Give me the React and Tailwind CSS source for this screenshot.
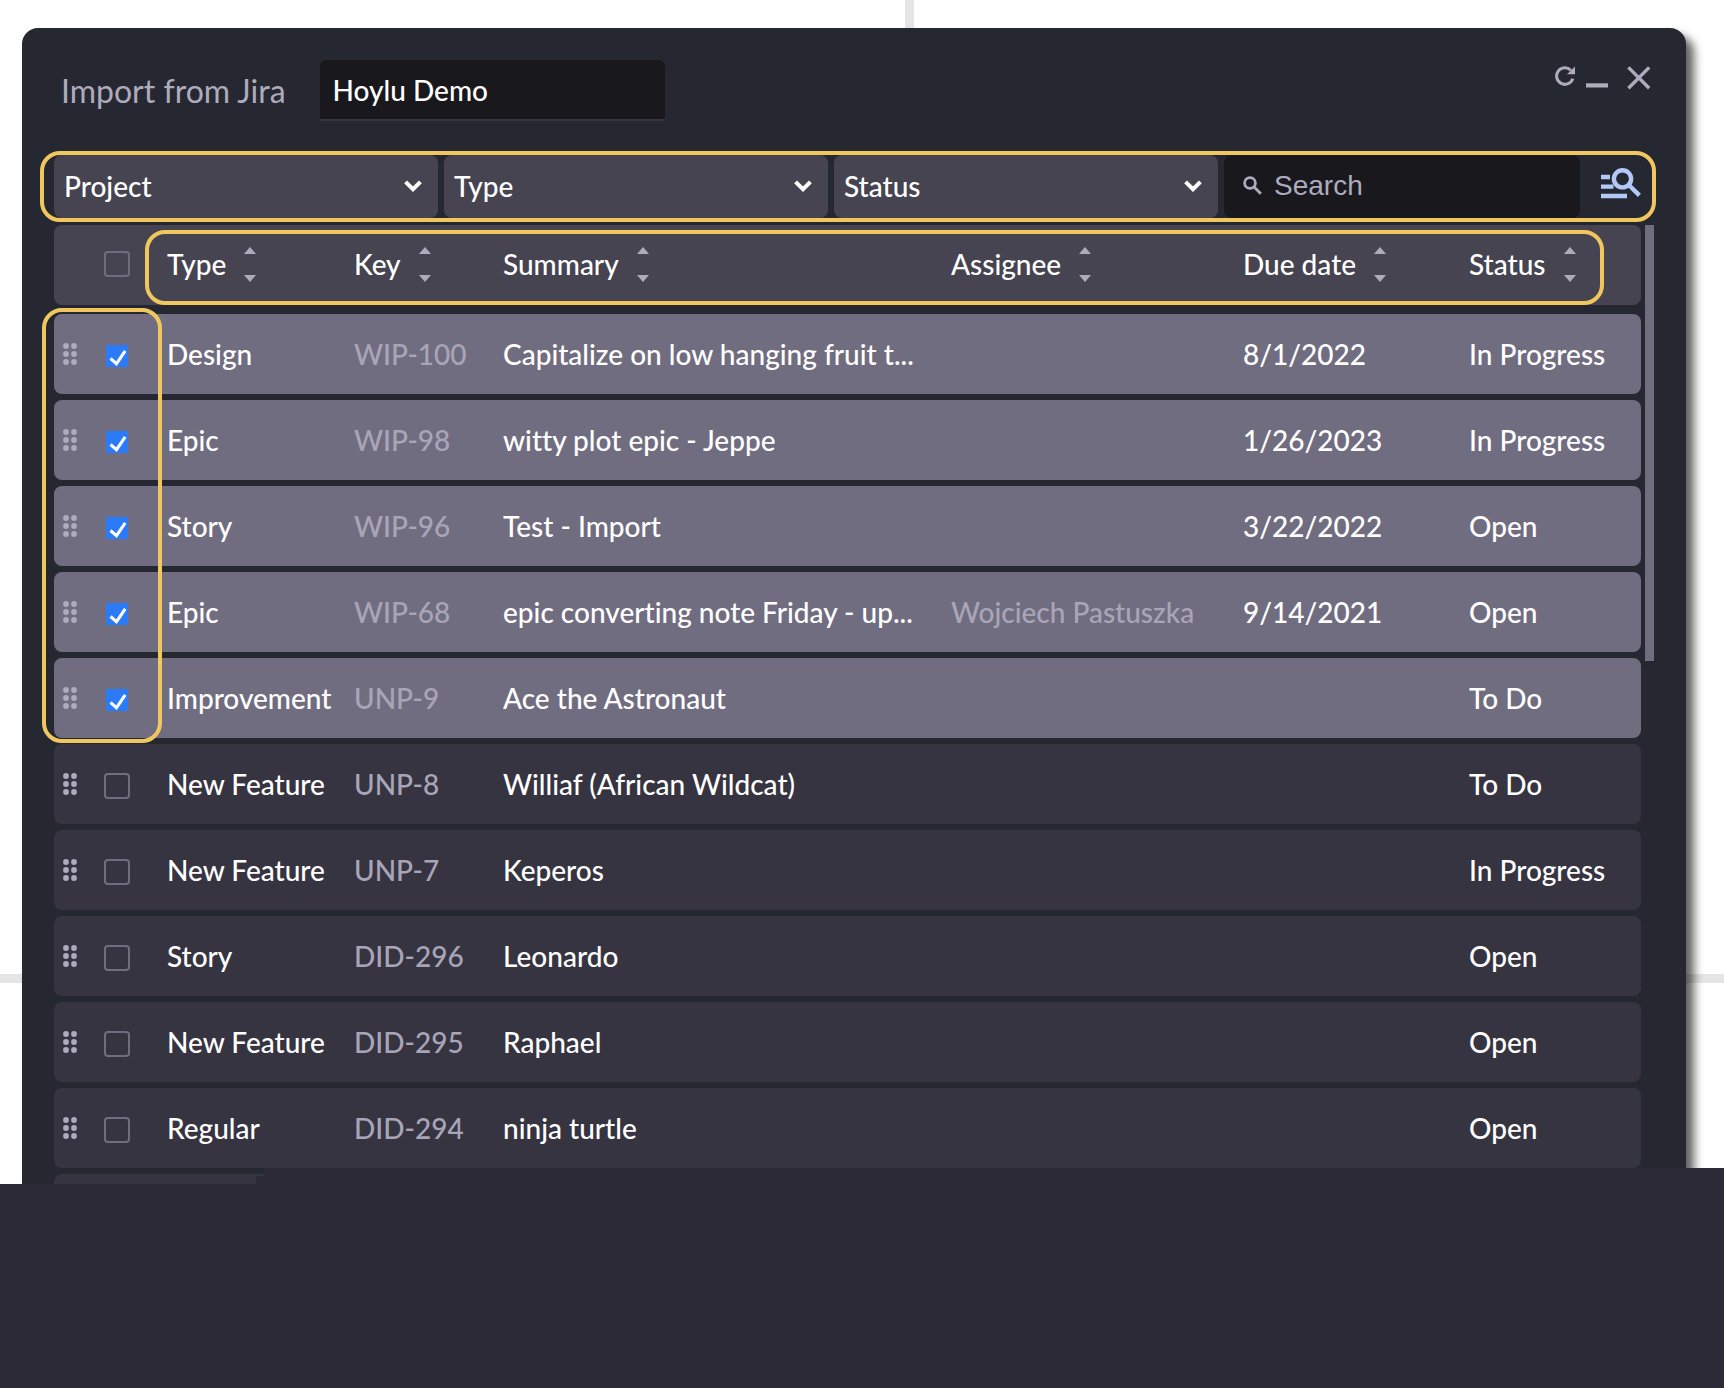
const ISSUES = [
  { type: "Design", key: "WIP-100", summary: "Capitalize on low hanging fruit t...", assignee: "", due: "8/1/2022", status: "In Progress", checked: true },
  { type: "Epic", key: "WIP-98", summary: "witty plot epic - Jeppe", assignee: "", due: "1/26/2023", status: "In Progress", checked: true },
  { type: "Story", key: "WIP-96", summary: "Test - Import", assignee: "", due: "3/22/2022", status: "Open", checked: true },
  { type: "Epic", key: "WIP-68", summary: "epic converting note Friday - up...", assignee: "Wojciech Pastuszka", due: "9/14/2021", status: "Open", checked: true },
  { type: "Improvement", key: "UNP-9", summary: "Ace the Astronaut", assignee: "", due: "", status: "To Do", checked: true },
  { type: "New Feature", key: "UNP-8", summary: "Williaf (African Wildcat)", assignee: "", due: "", status: "To Do", checked: false },
  { type: "New Feature", key: "UNP-7", summary: "Keperos", assignee: "", due: "", status: "In Progress", checked: false },
  { type: "Story", key: "DID-296", summary: "Leonardo", assignee: "", due: "", status: "Open", checked: false },
  { type: "New Feature", key: "DID-295", summary: "Raphael", assignee: "", due: "", status: "Open", checked: false },
  { type: "Regular", key: "DID-294", summary: "ninja turtle", assignee: "", due: "", status: "Open", checked: false },
];

const COLUMNS = ["Type", "Key", "Summary", "Assignee", "Due date", "Status"];

const ROW_GRID =
  "grid h-20 grid-cols-[50px_63px_187px_149px_minmax(0,1fr)_292px_226px_172px] items-center rounded-lg";

function Highlight({ className }) {
  return <div aria-hidden="true" className={`pointer-events-none absolute z-10 rounded-[20px] border-4 border-[#f0c75e] ${className}`} />;
}

function FilterSelect({ label }) {
  return (
    <div className="relative min-w-0 flex-1">
      <select
        aria-label={label}
        className="h-[63px] w-full appearance-none rounded-lg bg-[#464450] pb-[2px] pl-[10px] pr-12 text-[28px] text-white outline-none"
      >
        <option>{label}</option>
      </select>
      <svg viewBox="0 0 18 12" className="pointer-events-none absolute right-4 top-[25px] h-3 w-[18px]" fill="none" stroke="#fff" strokeWidth="4">
        <path d="M1.6 1.8 9 9.2l7.4-7.4" />
      </svg>
    </div>
  );
}

function SortIcon() {
  return (
    <svg viewBox="0 0 12 36" className="mt-[2px] h-9 w-3" fill="#aeabbd">
      <path d="M6 0l6 7H0z" />
      <path d="M0 28h12l-6 7z" />
    </svg>
  );
}

function DragHandle() {
  return (
    <svg viewBox="0 0 14 22" className="ml-[9px] h-[22px] w-[14px]" fill="#aeabbd">
      {[3, 11, 19].map((y) => (
        <g key={y}>
          <circle cx="3" cy={y} r="2.9" />
          <circle cx="11" cy={y} r="2.9" />
        </g>
      ))}
    </svg>
  );
}

function Checkbox({ label, checked = false }) {
  return (
    <span className="relative flex h-[26px] w-[26px] items-center justify-center">
      <input
        type="checkbox"
        aria-label={label}
        defaultChecked={checked}
        className="peer h-[26px] w-[26px] appearance-none rounded border-2 border-[#716d80] checked:h-[22px] checked:w-[22px] checked:rounded-[1px] checked:border-0 checked:bg-[#2b7bf8]"
      />
      <svg
        viewBox="0 0 22 22"
        className="pointer-events-none absolute left-[2px] top-[2px] hidden h-[22px] w-[22px] peer-checked:block"
        fill="none"
        stroke="#fff"
        strokeWidth="3"
      >
        <path d="M4.5 13.5l6 5.2L19.2 5.8" />
      </svg>
    </span>
  );
}

function WindowControls() {
  return (
    <div className="flex pt-[6px] text-[#aeabbd]">
      <button type="button" aria-label="Refresh" className="h-6 w-[20px]">
        <svg viewBox="0 0 20 24" className="h-6 w-5" fill="none" stroke="currentColor" strokeWidth="3">
          <path d="M17.8 12.6A8.3 8.3 0 1 1 15.8 4.2" />
          <path d="M20 .6v7.6h-8z" fill="currentColor" stroke="none" />
        </svg>
      </button>
      <button type="button" aria-label="Minimize" className="ml-[11px] h-6 w-[22px]">
        <svg viewBox="0 0 22 24" className="h-6 w-[22px]" fill="currentColor">
          <path d="M0 17.3h22v4.2H0z" />
        </svg>
      </button>
      <button type="button" aria-label="Close" className="ml-[19px] h-6 w-6">
        <svg viewBox="0 0 24 24" className="h-6 w-6" fill="none" stroke="currentColor" strokeWidth="3.4">
          <path d="M1.4 1.4l20.8 20.8M22.2 1.4L1.4 22.2" />
        </svg>
      </button>
    </div>
  );
}

function FilterBar() {
  return (
    <div className="relative mt-[34px] flex gap-[6px]">
      <Highlight className="-inset-y-1 left-[-14px] right-[-2px]" />
      <FilterSelect label="Project" />
      <FilterSelect label="Type" />
      <FilterSelect label="Status" />
      <label className="flex h-[63px] w-[356px] items-center rounded-lg bg-[#19181d] pb-[2px] pl-[19px]">
        <svg viewBox="0 0 19 19" className="h-[19px] w-[19px] shrink-0" fill="none" stroke="#aeabbd" strokeWidth="2.8">
          <circle cx="7" cy="7" r="5.4" />
          <path d="M10.8 10.8l7 7" />
        </svg>
        <input
          type="search"
          aria-label="Search"
          placeholder="Search"
          className="ml-3 min-w-0 flex-1 bg-transparent font-['Liberation_Sans',Arial,sans-serif] text-[28px] text-white outline-none placeholder:text-[#aeabbd]"
        />
      </label>
      <button type="button" aria-label="Advanced search" className="flex w-[68px] justify-center pl-[2px] pt-[13px]">
        <svg viewBox="0 0 40 31" className="h-[31px] w-10" fill="none" stroke="#b4c8f8" strokeWidth="4.4">
          <path d="M0 9h9M0 18.6h12.5M0 28h26" />
          <circle cx="21.5" cy="10.8" r="8.6" />
          <path d="M27.6 16.8l10.8 10.6" />
        </svg>
      </button>
    </div>
  );
}

function IssueTable() {
  return (
    <div className="relative mt-[7px] flex items-start">
      <Highlight className="left-[91px] right-[50px] top-[5px] h-[75px]" />
      <Highlight className="left-[-12px] top-[83px] h-[435px] w-[120px]" />
      <table className="block min-w-0 flex-1 text-[28px] leading-[34px] text-white">
        <thead className="block">
          <tr className={`${ROW_GRID} bg-[#464450] pb-[3px]`}>
            <td />
            <th className="font-medium">
              <Checkbox label="Select all issues" />
            </th>
            {COLUMNS.map((name) => (
              <th key={name} scope="col" className="text-left font-medium">
                <button type="button" className="flex items-center gap-[18px] whitespace-nowrap">
                  {name}
                  <SortIcon />
                </button>
              </th>
            ))}
          </tr>
        </thead>
        <tbody className="mt-[9px] flex flex-col gap-[6px]">
          {ISSUES.map((issue) => (
            <tr key={issue.key} className={`${ROW_GRID} whitespace-nowrap ${issue.checked ? "bg-[#716d80]" : "bg-[#363440]"}`}>
              <td>
                <DragHandle />
              </td>
              <td className="pt-[3px]">
                <Checkbox label={`Select ${issue.key}`} checked={issue.checked} />
              </td>
              <td>{issue.type}</td>
              <td className="text-[#a9a5b8]">{issue.key}</td>
              <td className="truncate">{issue.summary}</td>
              <td className="text-[#a9a5b8]">{issue.assignee}</td>
              <td>{issue.due}</td>
              <td>{issue.status}</td>
            </tr>
          ))}
        </tbody>
      </table>
      <div className="ml-1 h-[436px] w-[9px] bg-[#716d80]" />
    </div>
  );
}

export default function App() {
  return (
    <div className="flex min-h-screen flex-col bg-[#2b2a36] font-[Lato,sans-serif] font-medium [font-variant-ligatures:none]">
      <div className="relative overflow-hidden bg-white pl-[22px] pr-[38px] pt-7">
        {/* canvas guides behind the window */}
        <div className="absolute left-[905px] top-0 h-full w-[9px] bg-[#e5e5e5]" />
        <div className="absolute left-0 top-[974px] h-[9px] w-full bg-[#e5e5e5]" />

        <section className="relative rounded-t-[16px] bg-[#262831] px-8 pt-8 shadow-[8px_8px_10px_rgba(0,0,0,0.62)]">
          <header className="flex items-start pr-[3px]">
            <h1 className="pl-[7px] text-[32px] font-normal leading-[61px] text-[#aeabbd]">Import from Jira</h1>
            <input
              type="text"
              aria-label="Jira site"
              defaultValue="Hoylu Demo"
              className="ml-[34px] mr-auto h-[61px] w-[345px] rounded-t-md border-b-2 border-[#363440] bg-[#19181d] px-[13px] text-[28px] text-white outline-none"
            />
            <WindowControls />
          </header>
          <FilterBar />
          <IssueTable />
          <div className="mt-[6px] h-[10px] rounded-t-lg bg-[#363440]" />
        </section>

        <div className="absolute bottom-0 left-[264px] right-0 h-4 bg-[#2b2a36]" />
        <div className="absolute bottom-0 left-[256px] h-2 w-2 bg-[#2b2a36]" />
      </div>
    </div>
  );
}
